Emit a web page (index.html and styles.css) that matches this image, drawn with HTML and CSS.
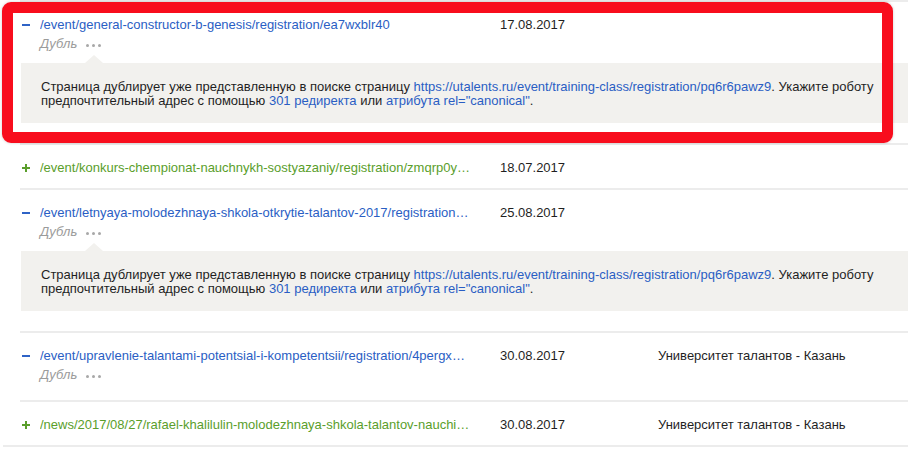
FILE: index.html
```html
<!DOCTYPE html>
<html lang="ru">
<head>
<meta charset="utf-8">
<link rel="stylesheet" href="styles.css">
</head>
<body>
<div class="list">
  <div class="row">
    <div class="head">
      <span class="icon"><svg width="8" height="8" viewBox="0 0 8 8"><rect x="0" y="3" width="8" height="2" fill="#2f63c6"/></svg></span>
      <div class="cell-url"><a class="url blue">/event/general-constructor-b-genesis/registration/ea7wxblr40</a><div class="dub">Дубль <span class="dots"><i></i><i></i><i></i></span></div></div>
      <div class="cell-date">17.08.2017</div>
      <div class="cell-org"></div>
    </div>
    <div class="panel">Страница дублирует уже представленную в поиске страницу <a class="lnk">https://utalents.ru/event/training-class/registration/pq6r6pawz9</a>. Укажите роботу предпочтительный адрес с помощью <a class="lnk">301 редиректа</a> или <a class="lnk">атрибута rel="canonical"</a>.</div>
  </div>
  <div class="row simple">
    <div class="head">
      <span class="icon"><svg width="8" height="8" viewBox="0 0 8 8"><rect x="0" y="3" width="8" height="2" fill="#5a9e2b"/><rect x="3" y="0" width="2" height="8" fill="#5a9e2b"/></svg></span>
      <div class="cell-url"><a class="url green">/event/konkurs-chempionat-nauchnykh-sostyazaniy/registration/zmqrp0yxkd</a></div>
      <div class="cell-date">18.07.2017</div>
      <div class="cell-org"></div>
    </div>
  </div>
  <div class="row">
    <div class="head">
      <span class="icon"><svg width="8" height="8" viewBox="0 0 8 8"><rect x="0" y="3" width="8" height="2" fill="#2f63c6"/></svg></span>
      <div class="cell-url"><a class="url blue">/event/letnyaya-molodezhnaya-shkola-otkrytie-talantov-2017/registration/abc</a><div class="dub">Дубль <span class="dots"><i></i><i></i><i></i></span></div></div>
      <div class="cell-date">25.08.2017</div>
      <div class="cell-org"></div>
    </div>
    <div class="panel">Страница дублирует уже представленную в поиске страницу <a class="lnk">https://utalents.ru/event/training-class/registration/pq6r6pawz9</a>. Укажите роботу предпочтительный адрес с помощью <a class="lnk">301 редиректа</a> или <a class="lnk">атрибута rel="canonical"</a>.</div>
  </div>
  <div class="row dubonly">
    <div class="head">
      <span class="icon"><svg width="8" height="8" viewBox="0 0 8 8"><rect x="0" y="3" width="8" height="2" fill="#2f63c6"/></svg></span>
      <div class="cell-url"><a class="url blue">/event/upravlenie-talantami-potentsial-i-kompetentsii/registration/4pergxabc</a><div class="dub">Дубль <span class="dots"><i></i><i></i><i></i></span></div></div>
      <div class="cell-date">30.08.2017</div>
      <div class="cell-org">Университет талантов - Казань</div>
    </div>
  </div>
  <div class="row simple">
    <div class="head">
      <span class="icon"><svg width="8" height="8" viewBox="0 0 8 8"><rect x="0" y="3" width="8" height="2" fill="#5a9e2b"/><rect x="3" y="0" width="2" height="8" fill="#5a9e2b"/></svg></span>
      <div class="cell-url"><a class="url green">/news/2017/08/27/rafael-khalilulin-molodezhnaya-shkola-talantov-nauchit-pobezhdat</a></div>
      <div class="cell-date">30.08.2017</div>
      <div class="cell-org">Университет талантов - Казань</div>
    </div>
  </div>
</div>
<div class="highlight"></div>
</body>
</html>
```

FILE: styles.css
```css
html, body {
  margin: 0;
  padding: 0;
  background: #fff;
}
body {
  font-family: "Liberation Sans", Arial, sans-serif;
  font-size: 13px;
  line-height: 15px;
  color: #1f1f1f;
  position: relative;
  width: 908px;
  height: 460px;
  overflow: hidden;
}
.list {
  margin-left: 3px;
  border-bottom: 2px solid #ececec;
}
.row {
  margin-left: 17px;
  border-top: 2px solid #ececec;
  padding-top: 15px;
  padding-bottom: 20px;
}
.row.simple { padding-bottom: 13px; }
.row.dubonly { padding-bottom: 18px; }
.head {
  display: grid;
  grid-template-columns: 20px 460px 158px 1fr;
}
.icon {
  display: flex;
  align-items: center;
  height: 15px;
  padding-left: 2px;
}
.icon svg { display: block; }
.cell-url {
  min-width: 0;
  padding-right: 30px;
}
.url {
  display: block;
  white-space: nowrap;
  overflow: hidden;
  text-overflow: ellipsis;
  text-decoration: none;
}
.blue { color: #2a5ec4; }
.green { color: #5a9e2b; }
.dub {
  margin-top: 4px;
  font-style: italic;
  color: #9b9b9b;
  display: flex;
  align-items: center;
  gap: 9px;
}
.dots {
  display: inline-flex;
  gap: 3px;
  margin-top: 3px;
}
.dots i {
  width: 3px;
  height: 3px;
  border-radius: 50%;
  background: #a8a8a8;
}
.panel {
  position: relative;
  margin-top: 12px;
  margin-left: 1px;
  background: #f2f1ee;
  padding: 17px 20px 15px 20px;
  line-height: 14px;
  height: 28px;
}
.panel::before {
  content: "";
  position: absolute;
  top: -8px;
  left: 64px;
  border-left: 9px solid transparent;
  border-right: 9px solid transparent;
  border-bottom: 8px solid #f2f1ee;
}
.lnk {
  color: #2a5ec4;
  text-decoration: none;
}
.highlight {
  position: absolute;
  left: 2px;
  top: 2px;
  width: 891px;
  height: 141px;
  box-sizing: border-box;
  border: 11px solid #f80d1d;
  border-radius: 9px;
  box-shadow: 0 0 3px rgba(0,0,0,0.2);
}
```
